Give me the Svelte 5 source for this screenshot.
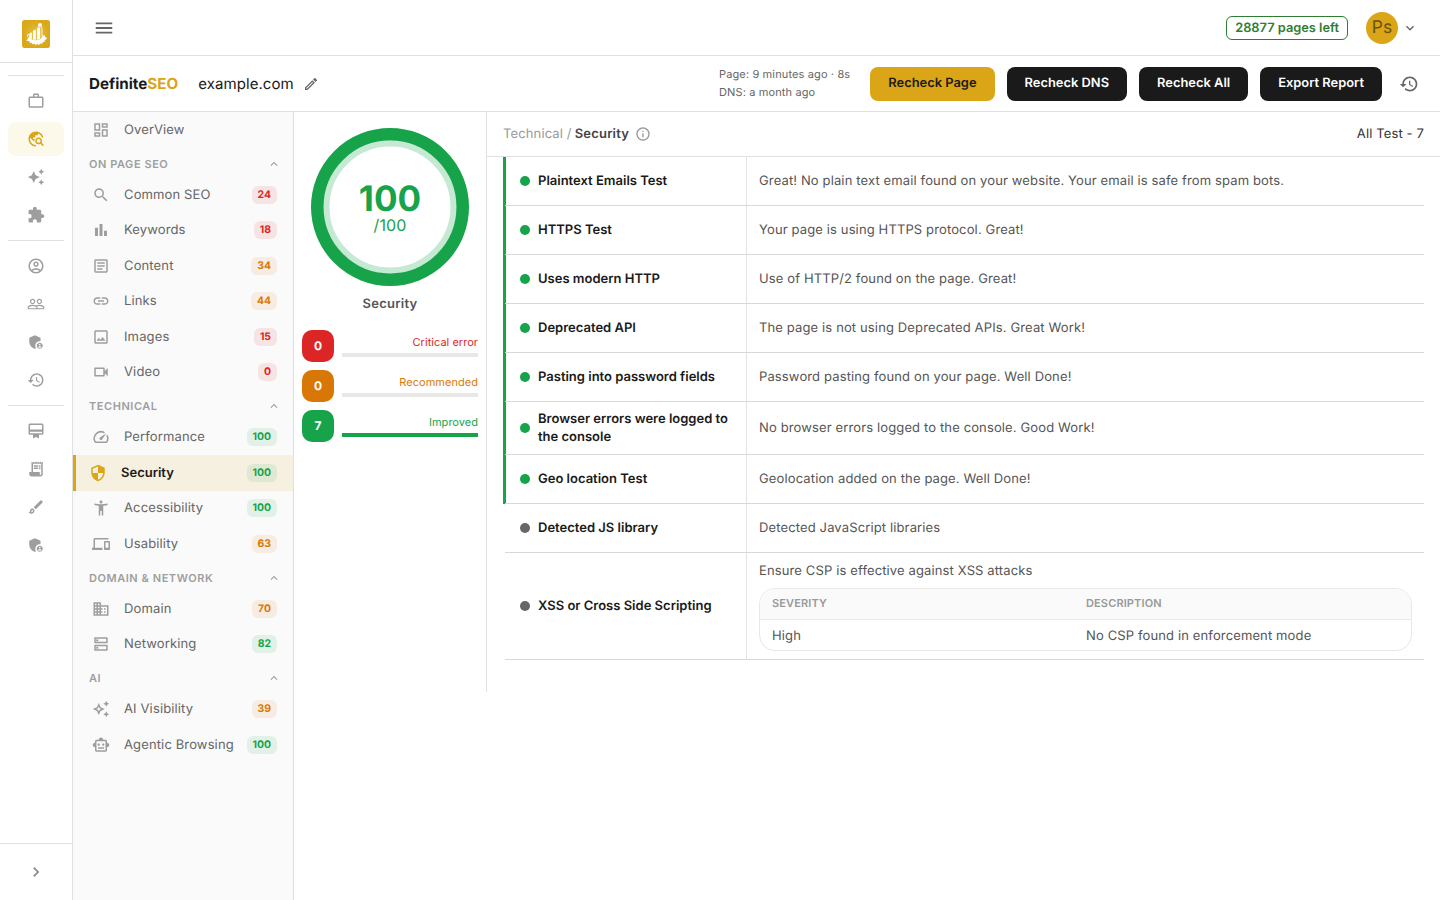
<script lang="ts">
	interface NavItem {
		label: string;
		icon: string;
		score?: number;
		tone?: string;
		active?: boolean;
	}

	interface TestRow {
		name: string;
		text: string;
		passed: boolean;
		details?: { severity: string; description: string }[];
	}

	const icons: Record<string, string> = {
		work: 'M14 6V4h-4v2h4zM4 8v11h16V8H4zm16-2c1.11 0 2 .89 2 2v11c0 1.11-.89 2-2 2H4c-1.11 0-2-.89-2-2l.01-11c0-1.11.88-2 1.99-2h4V4c0-1.11.89-2 2-2h4c1.11 0 2 .89 2 2v2h4z',
		explore:
			'M19.3 16.9c.4-.7.7-1.5.7-2.4 0-2.5-2-4.5-4.5-4.5S11 12 11 14.5s2 4.5 4.5 4.5c.9 0 1.7-.3 2.4-.7l3.2 3.2 1.4-1.4-3.2-3.2zm-3.8.1c-1.4 0-2.5-1.1-2.5-2.5s1.1-2.5 2.5-2.5 2.5 1.1 2.5 2.5-1.1 2.5-2.5 2.5zM12 20v2C6.48 22 2 17.52 2 12S6.48 2 12 2c4.84 0 8.87 3.44 9.8 8h-2.07c-.64-2.46-2.4-4.47-4.73-5.41V5c0 1.1-.9 2-2 2h-2v2c0 .55-.45 1-1 1H8v2h2v3H9l-4.79-4.79C4.08 10.79 4 11.38 4 12c0 4.41 3.59 8 8 8z',
		sparkle:
			'm19 9 1.25-2.75L23 5l-2.75-1.25L19 1l-1.25 2.75L15 5l2.75 1.25L19 9zm-7.5.5L9 4 6.5 9.5 1 12l5.5 2.5L9 20l2.5-5.5L17 12l-5.5-2.5zM19 15l-1.25 2.75L15 19l2.75 1.25L19 23l1.25-2.75L23 19l-2.75-1.25L19 15z',
		extension:
			'M20.5 11H19V7c0-1.1-.9-2-2-2h-4V3.5C13 2.12 11.88 1 10.5 1S8 2.12 8 3.5V5H4c-1.1 0-1.99.9-1.99 2v3.8H3.5c1.49 0 2.7 1.21 2.7 2.7s-1.21 2.7-2.7 2.7H2V20c0 1.1.9 2 2 2h3.8v-1.5c0-1.49 1.21-2.7 2.7-2.7 1.49 0 2.7 1.21 2.7 2.7V22H17c1.1 0 2-.9 2-2v-4h1.5c1.38 0 2.5-1.12 2.5-2.5S21.88 11 20.5 11z',
		account:
			'M12 2C6.48 2 2 6.48 2 12s4.48 10 10 10 10-4.48 10-10S17.52 2 12 2zM7.35 18.5C8.66 17.56 10.26 17 12 17s3.34.56 4.65 1.5c-1.31.94-2.91 1.5-4.65 1.5s-3.34-.56-4.65-1.5zm10.79-1.38C16.45 15.8 14.32 15 12 15s-4.45.8-6.14 2.12C4.7 15.73 4 13.95 4 12c0-4.42 3.58-8 8-8s8 3.58 8 8c0 1.95-.7 3.73-1.86 5.12zM12 6c-1.93 0-3.5 1.57-3.5 3.5S10.07 13 12 13s3.5-1.57 3.5-3.5S13.93 6 12 6zm0 5c-.83 0-1.5-.67-1.5-1.5S11.17 8 12 8s1.5.67 1.5 1.5S12.83 11 12 11z',
		people:
			'M16.5 13c-1.2 0-3.07.34-4.5 1-1.43-.67-3.3-1-4.5-1C5.33 13 1 14.08 1 16.25V19h22v-2.75c0-2.17-4.33-3.25-6.5-3.25zm-4 4.5h-10v-1.25c0-.54 2.56-1.75 5-1.75s5 1.21 5 1.75v1.25zm9 0H14v-1.25c0-.46-.2-.86-.52-1.22.88-.3 1.96-.53 3.02-.53 2.44 0 5 1.21 5 1.75v1.25zM7.5 12c1.93 0 3.5-1.57 3.5-3.5S9.43 5 7.5 5 4 6.57 4 8.5 5.57 12 7.5 12zm0-5.5c1.1 0 2 .9 2 2s-.9 2-2 2-2-.9-2-2 .9-2 2-2zm9 5.5c1.93 0 3.5-1.57 3.5-3.5S18.43 5 16.5 5 13 6.57 13 8.5s1.57 3.5 3.5 3.5zm0-5.5c1.1 0 2 .9 2 2s-.9 2-2 2-2-.9-2-2 .9-2 2-2z',
		admin:
			'M17 11c.34 0 .67.04 1 .09V6.27L10.5 3 3 6.27v4.91c0 4.54 3.2 8.79 7.5 9.82.55-.13 1.08-.32 1.6-.55-.69-.98-1.1-2.17-1.1-3.45 0-3.31 2.69-6 6-6zM17 13c-2.21 0-4 1.79-4 4s1.79 4 4 4 4-1.79 4-4-1.79-4-4-4zm0 1.38c.62 0 1.12.51 1.12 1.12s-.51 1.12-1.12 1.12-1.12-.51-1.12-1.12.5-1.12 1.12-1.12zm0 5.37c-.93 0-1.74-.46-2.24-1.17.05-.72 1.51-1.08 2.24-1.08s2.19.36 2.24 1.08c-.5.71-1.31 1.17-2.24 1.17z',
		history:
			'M13 3c-4.97 0-9 4.03-9 9H1l3.89 3.89.07.14L9 12H6c0-3.87 3.13-7 7-7s7 3.13 7 7-3.13 7-7 7c-1.93 0-3.68-.79-4.94-2.06l-1.42 1.42C8.27 19.99 10.51 21 13 21c4.97 0 9-4.03 9-9s-4.03-9-9-9zm-1 5v5l4.28 2.54.72-1.21-3.5-2.08V8H12z',
		membership:
			'M20 2H4c-1.11 0-2 .89-2 2v11c0 1.11.89 2 2 2h4v5l4-2 4 2v-5h4c1.11 0 2-.89 2-2V4c0-1.11-.89-2-2-2zm0 13H4v-2h16v2zm0-5H4V4h16v6z',
		receipt:
			'M19.5 3.5 18 2l-1.5 1.5L15 2l-1.5 1.5L12 2l-1.5 1.5L9 2 7.5 3.5 6 2v14H3v3c0 1.66 1.34 3 3 3h12c1.66 0 3-1.34 3-3V2l-1.5 1.5zM19 19c0 .55-.45 1-1 1s-1-.45-1-1v-3H8V5h11v14zM9 7h6v2H9zm7 0h2v2h-2zm-7 3h6v2H9zm7 0h2v2h-2z',
		brush:
			'M7 16c.55 0 1 .45 1 1 0 1.1-.9 2-2 2-.17 0-.33-.02-.5-.05.31-.55.5-1.21.5-1.95 0-.55.45-1 1-1M18.67 3c-.26 0-.51.1-.71.29L9 12.25 11.75 15l8.96-8.96c.39-.39.39-1.02 0-1.41l-1.34-1.34c-.2-.2-.45-.29-.7-.29zM7 14c-1.66 0-3 1.34-3 3 0 1.31-1.16 2-2 2 .92 1.22 2.49 2 4 2 2.21 0 4-1.79 4-4 0-1.66-1.34-3-3-3z',
		dashboard:
			'M19 5v2h-4V5h4M9 5v6H5V5h4m10 8v6h-4v-6h4M9 17v2H5v-2h4M21 3h-8v6h8V3zM11 3H3v10h8V3zm10 8h-8v10h8V11zm-10 4H3v6h8v-6z',
		search:
			'M15.5 14h-.79l-.28-.27C15.41 12.59 16 11.11 16 9.5 16 5.91 13.09 3 9.5 3S3 5.91 3 9.5 5.91 16 9.5 16c1.61 0 3.09-.59 4.23-1.57l.27.28v.79l5 4.99L20.49 19l-4.99-5zm-6 0C7.01 14 5 11.99 5 9.5S7.01 5 9.5 5 14 7.01 14 9.5 11.99 14 9.5 14z',
		chart: 'M4 9h4v11H4zm12 4h4v7h-4zm-6-9h4v16h-4z',
		article:
			'M19 5v14H5V5h14m0-2H5c-1.1 0-2 .9-2 2v14c0 1.1.9 2 2 2h14c1.1 0 2-.9 2-2V5c0-1.1-.9-2-2-2zM14 17H7v-2h7v2zm3-4H7v-2h10v2zm0-4H7V7h10v2z',
		link: 'M3.9 12c0-1.71 1.39-3.1 3.1-3.1h4V7H7c-2.76 0-5 2.24-5 5s2.24 5 5 5h4v-1.9H7c-1.71 0-3.1-1.39-3.1-3.1zM8 13h8v-2H8v2zm9-6h-4v1.9h4c1.71 0 3.1 1.39 3.1 3.1s-1.39 3.1-3.1 3.1h-4V17h4c2.76 0 5-2.24 5-5s-2.24-5-5-5z',
		image:
			'M19 5v14H5V5h14m0-2H5c-1.1 0-2 .9-2 2v14c0 1.1.9 2 2 2h14c1.1 0 2-.9 2-2V5c0-1.1-.9-2-2-2zm-4.86 8.86-3 3.87L9 13.14 6 17h12l-3.86-5.14z',
		video:
			'M15 8v8H5V8h10m1-2H4c-.55 0-1 .45-1 1v10c0 .55.45 1 1 1h12c.55 0 1-.45 1-1v-3.5l4 4v-11l-4 4V7c0-.55-.45-1-1-1z',
		speed:
			'm20.38 8.57-1.23 1.85a8 8 0 0 1-.22 7.58H5.07A8 8 0 0 1 15.58 6.85l1.85-1.23A10 10 0 0 0 3.35 19a2 2 0 0 0 1.72 1h13.85a2 2 0 0 0 1.74-1 10 10 0 0 0-.27-10.44zM10.59 15.41a2 2 0 0 0 2.83 0l5.66-8.49-8.49 5.66a2 2 0 0 0 0 2.83z',
		security:
			'M12 1 3 5v6c0 5.55 3.84 10.74 9 12 5.16-1.26 9-6.45 9-12V5l-9-4zm0 10.99h7c-.53 4.12-3.28 7.79-7 8.94V12H5V6.3l7-3.11v8.8z',
		accessibility:
			'M20.5 6c-2.61.7-5.67 1-8.5 1s-5.89-.3-8.5-1L3 8c1.86.5 4 .83 6 1v13h2v-6h2v6h2V9c2-.17 4.14-.5 6-1l-.5-2zM12 6c1.1 0 2-.9 2-2s-.9-2-2-2-2 .9-2 2 .9 2 2 2z',
		devices:
			'M4 6h18V4H4c-1.1 0-2 .9-2 2v11H0v3h14v-3H4V6zm19 2h-6c-.55 0-1 .45-1 1v10c0 .55.45 1 1 1h6c.55 0 1-.45 1-1V9c0-.55-.45-1-1-1zm-1 9h-4v-7h4v7z',
		business:
			'M12 7V3H2v18h20V7H12zM6 19H4v-2h2v2zm0-4H4v-2h2v2zm0-4H4V9h2v2zm0-4H4V5h2v2zm4 12H8v-2h2v2zm0-4H8v-2h2v2zm0-4H8V9h2v2zm0-4H8V5h2v2zm10 12h-8v-2h2v-2h-2v-2h2v-2h-2V9h8v10zm-2-8h-2v2h2v-2zm0 4h-2v2h2v-2z',
		dns: 'M19 15v4H5v-4h14m1-2H4c-.55 0-1 .45-1 1v6c0 .55.45 1 1 1h16c.55 0 1-.45 1-1v-6c0-.55-.45-1-1-1zM7 18.5c-.82 0-1.5-.67-1.5-1.5s.68-1.5 1.5-1.5 1.5.67 1.5 1.5-.67 1.5-1.5 1.5zM19 5v4H5V5h14m1-2H4c-.55 0-1 .45-1 1v6c0 .55.45 1 1 1h16c.55 0 1-.45 1-1V4c0-.55-.45-1-1-1zM7 8.5c-.82 0-1.5-.67-1.5-1.5S6.18 5.5 7 5.5s1.5.68 1.5 1.5S7.83 8.5 7 8.5z',
		sparkleOutline:
			'm19 9 1.25-2.75L23 5l-2.75-1.25L19 1l-1.25 2.75L15 5l2.75 1.25zm0 6-1.25 2.75L15 19l2.75 1.25L19 23l1.25-2.75L23 19l-2.75-1.25zm-7.5-5.5L9 4 6.5 9.5 1 12l5.5 2.5L9 20l2.5-5.5L17 12l-5.500-2.500zm-1.510 3.490L9 15.170l-.990-2.180L5.830 12l2.180-.990L9 8.830l.990 2.180 2.180.990-2.180.990z',
		robot:
			'M20 9V7c0-1.1-.9-2-2-2h-3c0-1.66-1.34-3-3-3S9 3.34 9 5H6c-1.1 0-2 .9-2 2v2c-1.66 0-3 1.34-3 3s1.34 3 3 3v4c0 1.1.9 2 2 2h12c1.1 0 2-.9 2-2v-4c1.66 0 3-1.34 3-3s-1.34-3-3-3zm-2 10H6V7h12v12zm-9-6c-.83 0-1.5-.67-1.5-1.5S8.17 10 9 10s1.5.67 1.5 1.5S9.83 13 9 13zm7.5-1.5c0 .83-.67 1.5-1.5 1.5s-1.5-.67-1.5-1.5.67-1.5 1.5-1.5 1.5.67 1.5 1.5zM8 15h8v2H8v-2z',
		edit: 'm14.06 9.02.92.92L5.92 19H5v-.92l9.06-9.06M17.66 3c-.25 0-.51.1-.7.29l-1.83 1.83 3.75 3.75 1.83-1.83c.39-.39.39-1.02 0-1.41l-2.34-2.34c-.2-.2-.45-.29-.71-.29zm-3.6 3.19L3 17.25V21h3.75L17.81 9.94l-3.75-3.75z',
		menu: 'M3 18h18v-2H3v2zm0-5h18v-2H3v2zm0-7v2h18V6H3z',
		up: 'm12 8-6 6 1.41 1.41L12 10.83l4.59 4.58L18 14z',
		down: 'M16.59 8.59 12 13.17 7.41 8.59 6 10l6 6 6-6z',
		right: 'M10 6 8.59 7.41 13.17 12l-4.58 4.59L10 18l6-6z',
		info: 'M11 7h2v2h-2zm0 4h2v6h-2zm1-9C6.48 2 2 6.48 2 12s4.48 10 10 10 10-4.48 10-10S17.52 2 12 2zm0 18c-4.41 0-8-3.59-8-8s3.59-8 8-8 8 3.59 8 8-3.59 8-8 8z'
	};

	const railGroups = [
		['work', 'explore', 'sparkle', 'extension'],
		['account', 'people', 'admin', 'history'],
		['membership', 'receipt', 'brush', 'admin']
	];

	const overview: NavItem = { label: 'OverView', icon: 'dashboard' };

	const sections: { title: string; items: NavItem[] }[] = [
		{
			title: 'On Page SEO',
			items: [
				{ label: 'Common SEO', icon: 'search', score: 24, tone: 'red' },
				{ label: 'Keywords', icon: 'chart', score: 18, tone: 'red' },
				{ label: 'Content', icon: 'article', score: 34, tone: 'orange' },
				{ label: 'Links', icon: 'link', score: 44, tone: 'orange' },
				{ label: 'Images', icon: 'image', score: 15, tone: 'red' },
				{ label: 'Video', icon: 'video', score: 0, tone: 'red' }
			]
		},
		{
			title: 'Technical',
			items: [
				{ label: 'Performance', icon: 'speed', score: 100, tone: 'green' },
				{ label: 'Security', icon: 'security', score: 100, tone: 'green', active: true },
				{ label: 'Accessibility', icon: 'accessibility', score: 100, tone: 'green' },
				{ label: 'Usability', icon: 'devices', score: 63, tone: 'orange' }
			]
		},
		{
			title: 'Domain & Network',
			items: [
				{ label: 'Domain', icon: 'business', score: 70, tone: 'orange' },
				{ label: 'Networking', icon: 'dns', score: 82, tone: 'green' }
			]
		},
		{
			title: 'AI',
			items: [
				{ label: 'AI Visibility', icon: 'sparkleOutline', score: 39, tone: 'orange' },
				{ label: 'Agentic Browsing', icon: 'robot', score: 100, tone: 'green' }
			]
		}
	];

	const counts = [
		{ label: 'Critical error', value: 0, tone: 'red' },
		{ label: 'Recommended', value: 0, tone: 'orange' },
		{ label: 'Improved', value: 7, tone: 'green' }
	];

	const total = counts.reduce((sum, c) => sum + c.value, 0);

	const tests: TestRow[] = [
		{
			name: 'Plaintext Emails Test',
			text: 'Great! No plain text email found on your website. Your email is safe from spam bots.',
			passed: true
		},
		{ name: 'HTTPS Test', text: 'Your page is using HTTPS protocol. Great!', passed: true },
		{ name: 'Uses modern HTTP', text: 'Use of HTTP/2 found on the page. Great!', passed: true },
		{
			name: 'Deprecated API',
			text: 'The page is not using Deprecated APIs. Great Work!',
			passed: true
		},
		{
			name: 'Pasting into password fields',
			text: 'Password pasting found on your page. Well Done!',
			passed: true
		},
		{
			name: 'Browser errors were logged to the console',
			text: 'No browser errors logged to the console. Good Work!',
			passed: true
		},
		{ name: 'Geo location Test', text: 'Geolocation added on the page. Well Done!', passed: true },
		{ name: 'Detected JS library', text: 'Detected JavaScript libraries', passed: false },
		{
			name: 'XSS or Cross Side Scripting',
			text: 'Ensure CSP is effective against XSS attacks',
			passed: false,
			details: [{ severity: 'High', description: 'No CSP found in enforcement mode' }]
		}
	];
</script>

{#snippet icon(name: string, size = 18)}
	<svg class="icon" width={size} height={size} viewBox="0 0 24 24" aria-hidden="true">
		<path d={icons[name]} />
	</svg>
{/snippet}

{#snippet navItem(item: NavItem)}
	<div class="nav-item" class:active={item.active}>
		{@render icon(item.icon)}
		<span class="nav-label">{item.label}</span>
		{#if item.score !== undefined}
			<span class="score {item.tone}">{item.score}</span>
		{/if}
	</div>
{/snippet}

<div class="app">
	<aside class="rail">
		<div class="rail-logo">
			<svg width="28" height="28" viewBox="0 0 28 28" aria-hidden="true">
				<defs>
					<radialGradient id="gold">
						<stop offset="0" stop-color="#e8bf3c" />
						<stop offset="1" stop-color="#d9a71a" />
					</radialGradient>
				</defs>
				<rect width="28" height="28" rx="2.5" fill="url(#gold)" />
				<path
					d="M4.2 20.2l1.6-1 .2-1.8 2 .2 1 1.5q4.6 2.6 9.6-.4l2.6-3.2 1.6-.2.3 1.7 1.7.6-.6 1.8-1.5.5.1 1.9-1.9.3-.8 1.6-1.9-.3-1.2 1.5-1.7-.9-1.7 1.1-1.3-1.3-1.9.5-.8-1.6-2 .1-.1-1.7-1.9-.2z"
					fill="#fff"
				/>
				<path
					d="M7.3 13.4l2.6-1.2v6.9l-2.6-1zM10.9 10.8l2.9-1.4v10.6l-2.9-.5zM14.9 8.6l3.3-1.7v11.9l-3.3 1.2z"
					fill="#fff"
				/>
				<circle cx="18" cy="4.9" r="1.9" fill="#fff" />
				<path
					d="M15.3 7.4l1.8-1.6M19.2 6.4l.8 2v8.4M5.7 16.8l-.2-2 1.4-.4"
					stroke="#fff"
					stroke-width=".9"
					fill="none"
				/>
			</svg>
		</div>
		<nav class="rail-nav">
			{#each railGroups as group}
				<div class="rail-group">
					{#each group as name}
						<div class="rail-item" class:selected={name === 'explore'}>{@render icon(name)}</div>
					{/each}
				</div>
			{/each}
		</nav>
		<div class="rail-footer">{@render icon('right', 20)}</div>
	</aside>

	<div class="page">
		<header class="topbar">
			{@render icon('menu', 22)}
			<div class="account">
				<span class="quota">28877 pages left</span>
				<span class="avatar">Ps</span>
				{@render icon('down', 16)}
			</div>
		</header>

		<header class="sitebar">
			<div class="brand">Definite<span>SEO</span></div>
			<div class="site">example.com</div>
			{@render icon('edit', 16)}
			<div class="checked">
				<div>Page: 9 minutes ago · 8s</div>
				<div>DNS: a month ago</div>
			</div>
			<div class="actions">
				<button class="btn primary">Recheck Page</button>
				<button class="btn">Recheck DNS</button>
				<button class="btn">Recheck All</button>
				<button class="btn">Export Report</button>
			</div>
			{@render icon('history', 20)}
		</header>

		<div class="body">
			<nav class="sidebar">
				{@render navItem(overview)}
				{#each sections as section}
					<div class="nav-title">
						<span>{section.title}</span>
						{@render icon('up', 14)}
					</div>
					{#each section.items as item}
						{@render navItem(item)}
					{/each}
				{/each}
			</nav>

			<section class="summary">
				<div class="gauge">
					<svg width="158" height="158" viewBox="0 0 158 158" aria-hidden="true">
						<circle cx="79" cy="79" r="63.5" fill="none" stroke="#c5e9d2" stroke-width="6" />
						<circle cx="79" cy="79" r="72.7" fill="none" stroke="#16a34a" stroke-width="12.6" />
					</svg>
					<div class="gauge-text">
						<strong>100</strong>
						<span>/100</span>
					</div>
				</div>
				<div class="gauge-label">Security</div>
				<div class="counts">
					{#each counts as count}
						<div class="count {count.tone}">
							<div class="tile">{count.value}</div>
							<div class="meter">
								<span>{count.label}</span>
								<div class="track">
									<div class="fill" style="width: {(count.value / total) * 100}%"></div>
								</div>
							</div>
						</div>
					{/each}
				</div>
			</section>

			<main class="report">
				<div class="crumbs">
					<span class="parent">Technical /</span>
					<strong>Security</strong>
					{@render icon('info', 16)}
					<span class="total">All Test - 7</span>
				</div>
				<div class="tests">
					{#each tests as test}
						<div class="test" class:passed={test.passed}>
							<div class="test-name"><i class="dot"></i><span>{test.name}</span></div>
							<div class="test-text">
								<p>{test.text}</p>
								{#if test.details}
									<div class="details">
										<div class="details-row head">
											<span>Severity</span>
											<span>Description</span>
										</div>
										{#each test.details as detail}
											<div class="details-row">
												<span>{detail.severity}</span>
												<span>{detail.description}</span>
											</div>
										{/each}
									</div>
								{/if}
							</div>
						</div>
					{/each}
				</div>
			</main>
		</div>
	</div>
</div>

<style>
	:global(body) {
		margin: 0;
		background: #fff;
	}

	.app {
		display: flex;
		height: 100vh;
		overflow: hidden;
		font-family: Inter, 'Liberation Sans', sans-serif;
		font-size: 13px;
		letter-spacing: 0.01em;
		color: #1a1a1a;
		text-rendering: geometricPrecision;
	}

	.app * {
		box-sizing: border-box;
	}

	.icon {
		display: block;
		flex-shrink: 0;
		fill: currentColor;
	}

	/* icon rail */
	.rail {
		display: flex;
		flex-direction: column;
		width: 73px;
		border-right: 1px solid #e0e0e0;
		color: #9e9e9e;
	}

	.rail-logo {
		display: flex;
		justify-content: center;
		height: 63px;
		padding-top: 20px;
		border-bottom: 1px solid #e0e0e0;
	}

	.rail-nav {
		flex: 1;
		padding: 12px 8px 0;
	}

	.rail-group {
		display: flex;
		flex-direction: column;
		gap: 4px;
		padding: 8px 0;
		border-top: 1px solid #e0e0e0;
	}

	.rail-item {
		display: flex;
		align-items: center;
		justify-content: center;
		height: 34px;
		border-radius: 8px;
	}

	.rail-item.selected {
		background: #fcf8ea;
		color: #daa516;
	}

	.rail-footer {
		display: flex;
		align-items: center;
		justify-content: center;
		height: 57px;
		border-top: 1px solid #e0e0e0;
		color: #8a8a8a;
	}

	/* headers */
	.page {
		display: flex;
		flex: 1;
		flex-direction: column;
		min-width: 0;
	}

	.topbar {
		display: flex;
		align-items: center;
		justify-content: space-between;
		height: 56px;
		padding: 0 22px 0 20px;
		border-bottom: 1px solid #e0e0e0;
		color: #666;
	}

	.account {
		display: flex;
		align-items: center;
	}

	.quota {
		height: 24px;
		padding: 0 8px;
		border: 1px solid #2e7d32;
		border-radius: 6px;
		color: #2e7d32;
		font-size: 12.8px;
		font-weight: 600;
		line-height: 23px;
		letter-spacing: 0;
	}

	.avatar {
		width: 32px;
		height: 32px;
		margin: 0 4px 0 18px;
		border-radius: 50%;
		background: #daa516;
		color: #6b5213;
		font-size: 17.5px;
		line-height: 31px;
		text-align: center;
	}

	.sitebar {
		display: flex;
		align-items: center;
		height: 56px;
		padding: 0 21px 0 16px;
		border-bottom: 1px solid #e0e0e0;
		color: #666;
	}

	.brand {
		color: #1a1a1a;
		font-size: 15.2px;
		font-weight: 700;
		letter-spacing: 0;
	}

	.brand span {
		color: #daa516;
	}

	.site {
		margin: 0 9px 0 20px;
		color: #1a1a1a;
		font-size: 15px;
		letter-spacing: 0.005em;
	}

	.checked {
		margin-left: auto;
		padding-bottom: 1px;
		font-size: 11px;
		line-height: 18px;
	}

	.actions {
		display: flex;
		gap: 12px;
		margin: 0 17px 0 20px;
	}

	.btn {
		height: 34px;
		padding: 0 18px;
		border: 0;
		border-radius: 8px;
		background: #1a1a1a;
		color: #fff;
		font: 600 12.9px Inter, 'Liberation Sans', sans-serif;
		text-rendering: inherit;
	}

	.btn.primary {
		background: #daa516;
		color: #1a1a1a;
	}

	.body {
		display: flex;
		flex: 1;
		min-height: 0;
	}

	/* audit sections */
	.sidebar {
		width: 221px;
		border-right: 1px solid #e0e0e0;
		background: #fafafa;
	}

	.nav-item {
		display: flex;
		align-items: center;
		height: 35.5px;
		padding: 0 16px 0 19px;
		color: #9e9e9e;
	}

	.nav-label {
		flex: 1;
		margin-left: 14px;
		color: #666;
		white-space: nowrap;
	}

	.nav-item.active {
		padding-left: 13px;
		border-left: 3px solid #daa516;
		background: #f6f0e0;
		color: #daa516;
	}

	.active .nav-label {
		color: #1a1a1a;
		font-weight: 600;
		letter-spacing: 0;
	}

	.score {
		height: 18px;
		padding: 0 6px;
		border-radius: 6px;
		font-size: 10.4px;
		font-weight: 700;
		line-height: 18px;
		letter-spacing: 0;
	}

	.score.red {
		background: rgba(220, 38, 38, 0.1);
		color: #dc2626;
	}

	.score.orange {
		background: rgba(217, 119, 6, 0.1);
		color: #d97706;
	}

	.score.green {
		background: rgba(22, 163, 74, 0.1);
		color: #16a34a;
	}

	.nav-title {
		display: flex;
		align-items: center;
		justify-content: space-between;
		height: 29.5px;
		padding: 3px 12px 0 16px;
		color: #9e9e9e;
		font-size: 11px;
		font-weight: 600;
		letter-spacing: 0.05em;
		text-transform: uppercase;
	}

	/* score summary */
	.summary {
		width: 193px;
		height: 580px;
		padding: 16px 8px 0;
		border-right: 1px solid #e0e0e0;
	}

	.gauge {
		display: grid;
		place-items: center;
	}

	.gauge > * {
		grid-area: 1 / 1;
		display: block;
	}

	.gauge-text {
		color: #16a34a;
		text-align: center;
	}

	.gauge-text strong,
	.gauge-text span {
		display: block;
	}

	.gauge-text strong {
		font-size: 35px;
		line-height: 36px;
		letter-spacing: 0;
	}

	.gauge-text span {
		font-size: 16px;
		line-height: 17px;
	}

	.gauge-label {
		margin-top: 8px;
		color: #555;
		font-weight: 600;
		line-height: 20px;
		text-align: center;
		letter-spacing: 0.02em;
	}

	.counts {
		display: flex;
		flex-direction: column;
		gap: 8px;
		margin-top: 16px;
	}

	.count {
		display: flex;
		gap: 8px;
	}

	.count.red {
		--tone: #dc2626;
	}

	.count.orange {
		--tone: #d97706;
	}

	.count.green {
		--tone: #16a34a;
	}

	.tile {
		width: 32px;
		height: 32px;
		border-radius: 10px;
		background: var(--tone);
		color: #fff;
		font-size: 12px;
		font-weight: 700;
		line-height: 32px;
		text-align: center;
	}

	.meter {
		flex: 1;
		padding-top: 4px;
		color: var(--tone);
		font-size: 11px;
		line-height: 17px;
		text-align: right;
		letter-spacing: 0.003em;
	}

	.meter span {
		display: block;
	}

	.track {
		height: 4px;
		margin-top: 2px;
		background: #e8e8e8;
	}

	.fill {
		height: 100%;
		background: var(--tone);
	}

	/* test results */
	.report {
		flex: 1;
	}

	.crumbs {
		display: flex;
		align-items: center;
		gap: 3px;
		height: 45px;
		padding: 0 16px;
		border-bottom: 1px solid #e0e0e0;
		color: #999;
	}

	.crumbs span,
	.crumbs strong {
		padding-bottom: 1px;
	}

	.crumbs strong {
		margin-right: 3px;
		color: #444;
		font-weight: 600;
		letter-spacing: 0.015em;
	}

	.total {
		margin-left: auto;
		color: #333;
	}

	.tests {
		isolation: isolate;
		padding: 0 16px 0 18px;
	}

	.test {
		position: relative;
		display: grid;
		grid-template-columns: 242px 1fr;
		min-height: 49px;
		border-bottom: 1px solid #d8d8d8;
	}

	/* sits under the row line so the line cuts across its right edge */
	.test.passed::before {
		content: '';
		position: absolute;
		top: 0;
		bottom: -1px;
		left: -2px;
		z-index: -1;
		width: 3px;
		background: #16a34a;
	}

	.test-name {
		display: flex;
		align-items: center;
		gap: 8px;
		padding: 8px 12px 8px 15px;
		border-right: 1px solid #e4e4e4;
		font-weight: 600;
		line-height: 1.4;
		letter-spacing: 0;
	}

	.dot {
		flex-shrink: 0;
		width: 10px;
		height: 10px;
		border-radius: 50%;
		background: #666;
	}

	.passed .dot {
		background: #16a34a;
	}

	.test-text {
		align-self: center;
		padding: 8px 12px;
		color: #555;
	}

	p {
		margin: 0;
		line-height: 20px;
	}

	.details {
		margin-top: 7px;
		overflow: hidden;
		border: 1px solid #e8e8e8;
		border-radius: 16px;
	}

	.details-row {
		display: grid;
		grid-template-columns: 314px 1fr;
		height: 30px;
		padding: 0 12px;
		line-height: 32px;
	}

	.details-row.head {
		height: 31px;
		border-bottom: 1px solid #e8e8e8;
		background: #fafafa;
		color: #999;
		font-size: 11px;
		font-weight: 600;
		line-height: 29px;
		text-transform: uppercase;
	}
</style>
